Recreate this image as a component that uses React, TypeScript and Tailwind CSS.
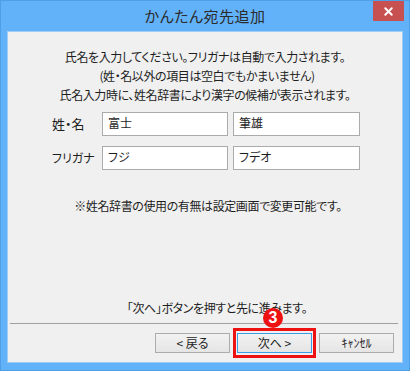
import { X } from 'lucide-react'

const jp = "font-['Noto_Sans_CJK_JP','Noto_Sans',sans-serif] [font-feature-settings:'palt']"

export default function App() {
  return (
    <div className={`w-[410px] h-[371px] bg-[#62b2fa] border border-[#4f9fe6] flex flex-col ${jp}`}>
      {/* title bar */}
      <div className="relative h-[30px] shrink-0 flex items-center justify-center">
        <span className="text-[15px] text-[#2b2b2b] tracking-[0.5px]">かんたん宛先追加</span>
        <button className="absolute right-[5px] top-0 w-[31px] h-[20px] bg-[#c75050] flex items-center justify-center">
          <X className="w-[13px] h-[13px] text-white" strokeWidth={3.5} />
        </button>
      </div>

      {/* client area */}
      <div className="flex-1 mx-[6px] mb-[7px] bg-[#f0f0f0] border border-[#9fcdf5] flex flex-col text-[#1e1e1e] tracking-[-0.4px]">
        <div className="pt-[15px] text-[12px] leading-[19px] text-center">
          <p>氏名を入力してください。フリガナは自動で入力されます。</p>
          <p className="pl-[4px]">(姓・名以外の項目は空白でもかまいません)</p>
          <p>氏名入力時に、姓名辞書により漢字の候補が表示されます。</p>
        </div>

        <div className="mt-[8px] pl-[44px] flex flex-col gap-[10px] tracking-normal">
          <div className="flex items-center">
            <span className="w-[50px] text-[13px]">姓・名</span>
            <div className="w-[126px] h-[24px] bg-white border border-[#ababab] px-[5px] text-[12px] leading-[20px]">富士</div>
            <div className="ml-[5px] w-[127px] h-[24px] bg-white border border-[#ababab] px-[5px] text-[12px] leading-[20px]">筆雄</div>
          </div>
          <div className="flex items-center">
            <span className="w-[50px] text-[12px]">フリガナ</span>
            <div className="w-[126px] h-[24px] bg-white border border-[#ababab] px-[5px] text-[12px] leading-[20px]">フジ</div>
            <div className="ml-[5px] w-[127px] h-[24px] bg-white border border-[#ababab] px-[5px] text-[12px] leading-[20px]">フデオ</div>
          </div>
        </div>

        <p className="mt-[26px] text-[12px] leading-[19px] text-center pl-[6px]">※姓名辞書の使用の有無は設定画面で変更可能です。</p>

        <p className="mt-auto text-[12px] leading-[19px] text-center pl-[24px]">「次へ」ボタンを押すと先に進みます。</p>

        <div className="mt-[6px] mx-[2px] mr-[4px] h-px bg-[#a0a0a0]" />

        <div className="mt-[9px] mb-[9px] pr-[8px] flex justify-end gap-[7px] text-[12px] tracking-normal">
          <button className="w-[75px] h-[20px] border border-[#acacac] bg-gradient-to-b from-[#f2f2f2] to-[#e5e5e5] leading-[18px]">&lt;&nbsp;戻る</button>
          <div className="relative">
            <button className="w-[75px] h-[20px] border border-[#3c9be6] bg-gradient-to-b from-[#f2f2f2] to-[#e5e5e5] leading-[18px]">次へ&nbsp;&gt;</button>
            <div className="absolute -left-[4px] -right-[4px] -top-[5px] -bottom-[5px] border-[3px] border-[#ee1111]" />
            <div className="absolute left-[26px] -top-[25px] w-[20px] h-[20px] rounded-full bg-[#ee1111] text-white flex items-center justify-center font-['Liberation_Sans',sans-serif] font-bold text-[16px] leading-none">3</div>
          </div>
          <button className="w-[75px] h-[20px] border border-[#acacac] bg-gradient-to-b from-[#f2f2f2] to-[#e5e5e5] leading-[18px] text-[12px]">ｷｬﾝｾﾙ</button>
        </div>
      </div>
    </div>
  )
}
